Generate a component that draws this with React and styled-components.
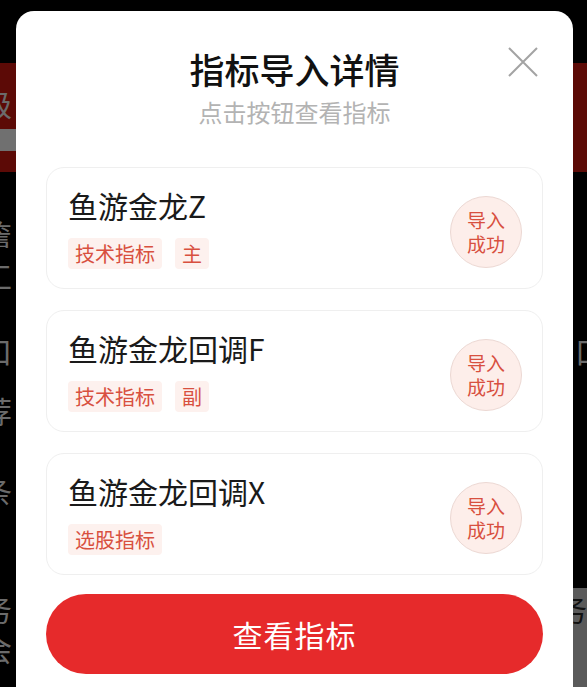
import styled, { createGlobalStyle } from "styled-components";

const GlobalStyle = createGlobalStyle`
  html, body {
    margin: 0;
    padding: 0;
    height: 687px;
    overflow: hidden;
    background: #000;
    font-family: "Noto Sans CJK SC", "Noto Sans", sans-serif;
  }
`;

const Page = styled.div`
  height: 687px;
  background: #000;
  color: #d6d6d6;
  overflow: hidden;
`;

const Banner = styled.div`
  margin-top: 63px;
  height: 109px;
  background: #b8150d;
  display: flex;
  flex-direction: column;
  justify-content: center;
  font-size: 30px;
  gap: 8px;
`;

const BannerText = styled.div`
  margin-left: -18px;
  line-height: 36px;
`;

const BannerPill = styled.div`
  margin-left: -10px;
  width: 40px;
  height: 22px;
  border-radius: 4px;
  background: #e0e0e0;
`;

const BgRow = styled.div`
  display: flex;
  justify-content: space-between;
  margin: ${(p) => p.$mt}px -18px 0;
  height: 40px;
  align-items: center;
  font-size: 30px;
`;

const BgFooter = styled.div`
  margin-top: 78px;
  display: flex;
  justify-content: space-between;
  align-items: flex-start;
`;

const BgFooterLeft = styled.div`
  margin-left: -18px;
  font-size: 30px;
  line-height: 40px;
`;

const BgFooterRight = styled.div`
  width: 30px;
  height: 100px;
  background: #b5b5b5;
  color: #222;
  font-size: 30px;
  line-height: 40px;
  padding-left: 2px;
`;

const Overlay = styled.div`
  position: fixed;
  inset: 0;
  background: rgba(0, 0, 0, 0.5);
`;

const Modal = styled.div`
  position: fixed;
  left: 16px;
  top: 11px;
  width: 557px;
  box-sizing: border-box;
  padding: 36px 30px 40px;
  background: #fff;
  border-radius: 18px;
`;

const CloseButton = styled.button`
  position: absolute;
  top: 36px;
  right: 35px;
  width: 30px;
  height: 30px;
  padding: 0;
  border: none;
  background: none;
  display: flex;
`;

const Header = styled.div`
  text-align: center;
  margin-bottom: 40px;
`;

const Title = styled.h2`
  margin: 0;
  font-size: 35px;
  line-height: 44px;
  font-weight: 500;
  color: #111;
`;

const Subtitle = styled.p`
  margin: 6px 0 0;
  font-size: 24px;
  line-height: 30px;
  color: #b3b3b3;
`;

const List = styled.div`
  display: flex;
  flex-direction: column;
  gap: 21px;
`;

const Card = styled.div`
  display: flex;
  align-items: center;
  justify-content: space-between;
  border: 1px solid #efefef;
  border-radius: 18px;
  padding: 18px 20px 19px 21px;
`;

const CardName = styled.div`
  font-size: 30px;
  line-height: 38px;
  color: #1a1a1a;
`;

const Tags = styled.div`
  display: flex;
  gap: 13px;
  margin-top: 14px;
`;

const Tag = styled.span`
  padding: 0 7px;
  height: 31px;
  line-height: 31px;
  font-size: 20px;
  color: #d8503f;
  background: #fdf1ee;
  border-radius: 4px;
`;

const Badge = styled.div`
  width: 72px;
  height: 72px;
  border-radius: 50%;
  box-sizing: border-box;
  border: 1px solid #ecd8d3;
  background: #fdeeea;
  color: #d8503f;
  font-size: 19px;
  line-height: 24px;
  display: flex;
  align-items: center;
  justify-content: center;
  text-align: center;
  margin-top: 8px;
`;

const PrimaryButton = styled.button`
  margin-top: 19px;
  width: 100%;
  height: 80px;
  border: none;
  border-radius: 40px;
  background: #e62a2b;
  color: #fff;
  font-family: inherit;
  font-size: 30px;
  letter-spacing: 1px;
`;

const indicators = [
  { name: "鱼游金龙Z", tags: ["技术指标", "主"] },
  { name: "鱼游金龙回调F", tags: ["技术指标", "副"] },
  { name: "鱼游金龙回调X", tags: ["选股指标"] },
];

export default function App() {
  return (
    <>
      <GlobalStyle />
      <Page>
        <Banner>
          <BannerText>级</BannerText>
          <BannerPill />
        </Banner>
        <BgRow $mt={40}>
          <span>詹</span>
        </BgRow>
        <BgRow $mt={3}>
          <span>工</span>
        </BgRow>
        <BgRow $mt={35}>
          <span>口</span>
          <span>口</span>
        </BgRow>
        <BgRow $mt={20}>
          <span>荐</span>
        </BgRow>
        <BgRow $mt={40}>
          <span>条</span>
        </BgRow>
        <BgFooter>
          <BgFooterLeft>
            务
            <br />
            会
          </BgFooterLeft>
          <BgFooterRight>务</BgFooterRight>
        </BgFooter>
      </Page>
      <Overlay />
      <Modal>
        <CloseButton aria-label="关闭">
          <svg width="30" height="30" viewBox="0 0 30 30">
            <path d="M1 1 L29 29 M29 1 L1 29" stroke="#a3a3a3" strokeWidth="2" fill="none" />
          </svg>
        </CloseButton>
        <Header>
          <Title>指标导入详情</Title>
          <Subtitle>点击按钮查看指标</Subtitle>
        </Header>
        <List>
          {indicators.map((item) => (
            <Card key={item.name}>
              <div>
                <CardName>{item.name}</CardName>
                <Tags>
                  {item.tags.map((t) => (
                    <Tag key={t}>{t}</Tag>
                  ))}
                </Tags>
              </div>
              <Badge>
                导入
                <br />
                成功
              </Badge>
            </Card>
          ))}
        </List>
        <PrimaryButton>查看指标</PrimaryButton>
      </Modal>
    </>
  );
}
